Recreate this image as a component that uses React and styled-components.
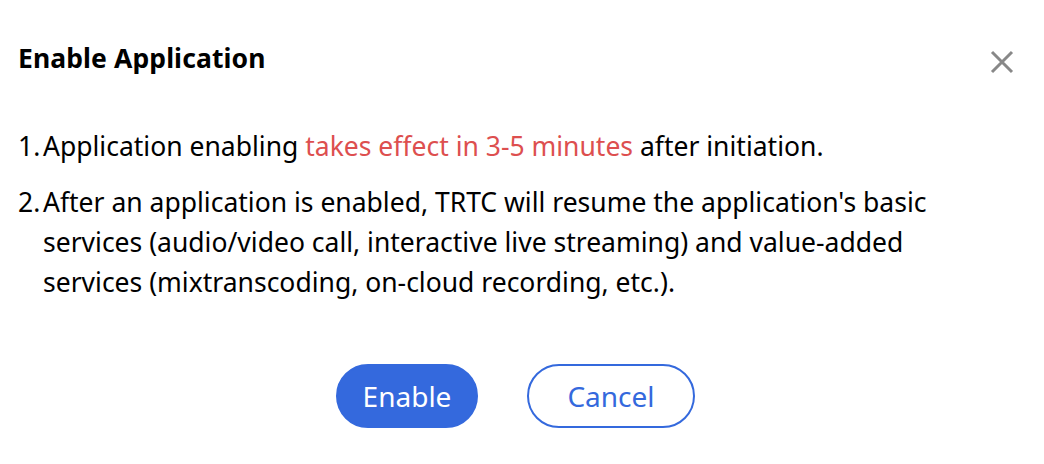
import React from 'react'
import styled, { createGlobalStyle } from 'styled-components'

const Global = createGlobalStyle`
  body {
    margin: 0;
    background: #fff;
    font-family: 'Noto Sans', 'Open Sans', sans-serif;
    color: #000;
  }
`

const items = [
  {
    num: '1.',
    text: (
      <>
        Application enabling <span className='warn'>takes effect in 3-5 minutes</span> after initiation.
      </>
    )
  },
  {
    num: '2.',
    text: (
      <>
        After an application is enabled, TRTC will resume the application's basic services
        (audio/video call, interactive live streaming) and value-added services (mixtranscoding,
        on-cloud recording, etc.).
      </>
    )
  }
]

const CloseIcon = () => (
  <svg width='24' height='24' viewBox='0 0 24 24'>
    <path d='M2 2 L22 22 M22 2 L2 22' stroke='#888' strokeWidth='3' fill='none' />
  </svg>
)

const App = () => (
  <>
    <Global />
    <S.Dialog>
      <S.Header>
        <S.Title>Enable Application</S.Title>
        <S.Close aria-label='close'>
          <CloseIcon />
        </S.Close>
      </S.Header>
      <S.List>
        {items.map((item) => (
          <S.Item key={item.num}>
            <S.Num>{item.num}</S.Num>
            <S.Text>{item.text}</S.Text>
          </S.Item>
        ))}
      </S.List>
      <S.Footer>
        <S.Button primary>Enable</S.Button>
        <S.Button>Cancel</S.Button>
      </S.Footer>
    </S.Dialog>
  </>
)

const S = {
  Dialog: styled.div`
    width: 1044px;
    height: 464px;
    box-sizing: border-box;
    padding: 38px 30px 0 18px;
    display: flex;
    flex-direction: column;
  `,
  Header: styled.div`
    display: flex;
    align-items: center;
    justify-content: space-between;
    height: 40px;
  `,
  Title: styled.div`
    font-size: 26.5px;
    font-weight: 700;
    letter-spacing: 0.1px;
  `,
  Close: styled.button`
    display: flex;
    align-items: center;
    justify-content: center;
    padding: 0;
    margin-top: 8px;
    border: 0;
    background: transparent;
  `,
  List: styled.div`
    display: flex;
    flex-direction: column;
    gap: 16px;
    margin-top: 48px;
    font-size: 26.5px;
    line-height: 40px;
  `,
  Item: styled.div`
    display: flex;
    width: 940px;

    .warn {
      color: #dd4f4f;
    }
  `,
  Num: styled.span`
    flex: 0 0 25px;
  `,
  Text: styled.span`
    flex: 1;
  `,
  Footer: styled.div`
    display: flex;
    justify-content: center;
    gap: 49px;
    margin-top: 62px;
    padding-right: 1px;
  `,
  Button: styled.button`
    box-sizing: border-box;
    height: 64px;
    width: ${(p) => (p.primary ? '142px' : '168px')};
    padding: 0;
    border-radius: 32px;
    border: 2px solid #3469dd;
    background: ${(p) => (p.primary ? '#3469dd' : '#fff')};
    color: ${(p) => (p.primary ? '#fff' : '#3469dd')};
    font-family: inherit;
    font-size: 28px;
  `
}

export default App
